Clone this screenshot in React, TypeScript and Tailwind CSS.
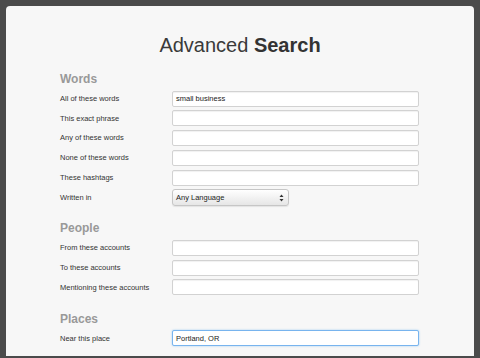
const font = { fontFamily: '"Liberation Sans", Arial, sans-serif' };

type Row = { label: string; value?: string; kind?: "input" | "select" | "focus" };

const sections: { title: string; rows: Row[] }[] = [
  {
    title: "Words",
    rows: [
      { label: "All of these words", value: "small business" },
      { label: "This exact phrase" },
      { label: "Any of these words" },
      { label: "None of these words" },
      { label: "These hashtags" },
      { label: "Written in", value: "Any Language", kind: "select" },
    ],
  },
  {
    title: "People",
    rows: [
      { label: "From these accounts" },
      { label: "To these accounts" },
      { label: "Mentioning these accounts" },
    ],
  },
  {
    title: "Places",
    rows: [{ label: "Near this place", value: "Portland, OR", kind: "focus" }],
  },
];

function Field({ row }: { row: Row }) {
  if (row.kind === "select") {
    return (
      <div className="flex h-[17px] w-[117px] items-center justify-between rounded-[3px] border border-[#c6c6c6] bg-gradient-to-b from-white to-[#e6e6e6] pl-[3px] pr-[4px] text-[7.5px] text-[#222] shadow-[0_1px_1px_rgba(0,0,0,0.08)]">
        <span>{row.value}</span>
        <svg width="5" height="8" viewBox="0 0 5 8">
          <path d="M2.5 0.5 L4.5 3 L0.5 3 Z" fill="#333" />
          <path d="M2.5 7.5 L4.5 5 L0.5 5 Z" fill="#333" />
        </svg>
      </div>
    );
  }
  const focus = row.kind === "focus";
  return (
    <div
      className={
        focus
          ? "flex h-4 w-[247px] items-center rounded-[2px] border border-[#78b4ee] bg-white pl-[3px] text-[7.5px] text-[#222] shadow-[0_0_2px_rgba(82,168,236,0.6)]"
          : "flex h-4 w-[247px] items-center rounded-[2px] border border-[#d2d2d2] bg-white pl-[3px] text-[7.5px] text-[#222] shadow-[inset_0_1px_1px_rgba(0,0,0,0.06)]"
      }
    >
      {row.value}
    </div>
  );
}

export default function App() {
  return (
    <div className="h-[358px] w-[480px] bg-[#4b4b4b] px-[6px] pt-[6px]" style={font}>
      <div className="h-[350px] overflow-hidden rounded-t-[4px] bg-[#f7f7f7]">
        <h1 className="mt-[26px] text-center text-[20px] leading-[26px] text-[#3a3a3a]">
          Advanced <span className="font-bold text-[#333]">Search</span>
        </h1>

        <div className="mt-[13px] pl-[54px]">
          {sections.map((section, i) => (
            <div key={section.title} className={i === 0 ? "" : i === 1 ? "mt-[14px]" : "mt-[15.5px]"}>
              <div className="mb-[3.5px] h-4 text-[12px] font-bold leading-4 text-[#999]">
                {section.title}
              </div>
              <div className="flex flex-col gap-[3.75px]">
                {section.rows.map((row) => (
                  <div key={row.label} className="flex items-center">
                    <div className="w-[112px] text-[7.5px] text-[#333]">{row.label}</div>
                    <Field row={row} />
                  </div>
                ))}
              </div>
            </div>
          ))}
        </div>
      </div>
    </div>
  );
}
